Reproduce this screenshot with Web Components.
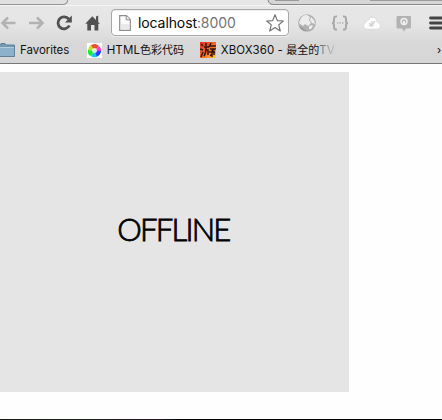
<!DOCTYPE html>
<html lang="en"><head><meta charset="utf-8"><title>localhost:8000</title>
<style>html,body{margin:0;width:442px;height:420px;overflow:hidden;background:#fefefe}</style></head>
<body><browser-window></browser-window>
<script>
const define=(name,html)=>{const t=document.createElement('template');t.innerHTML=html;
customElements.define(name,class extends HTMLElement{constructor(){super();this.attachShadow({mode:'open'}).append(t.content.cloneNode(true));}});};

define('tab-strip',`<style>:host{display:block;height:6px;background:#d0d0d0}svg{display:block}</style>
<svg width="442" height="6"><path d="M0 4.5H442" stroke="#8f8f8f"/><path d="M0 0H67.5Q66.5 4 63 4H0Z" fill="#e0e0e0"/><path d="M68 0Q67 4.5 63 4.5H0" fill="none" stroke="#959595" stroke-width="1.2"/><path d="M68.500 0Q68 4 64 5H272Q268 4 267.500 0Z" fill="#e7e7e7"/><path d="M273 4.500Q269 4 268 0H442V4.500Z" fill="#d6d6d6"/><path d="M268 0Q269 4.500 274 4.500H442" stroke="#888" fill="none"/><path d="M275 .5H299" stroke="#999"/><path d="M370 .5H442" stroke="#9b9b9b"/><path d="M0 5.500H442" stroke="#f4f4f4"/></svg>`);

define('tool-icon',`<style>:host{display:block;flex:none;width:var(--w,16px);height:16px}::slotted(svg){display:block;overflow:visible}</style><slot></slot>`);

define('address-field',`<style>:host{display:flex;flex:none;box-sizing:border-box;width:178px;height:27px;border:1px solid #a7a7a7;border-radius:4px;background:#fff;align-items:center;padding:0 4px 0 7px;box-shadow:0 1px #eee,inset 0 1px #eee}
span{flex:1;margin-left:7px;white-space:nowrap;font:14px/17px Inter,sans-serif;letter-spacing:-.1px;color:#080808}i{font-style:normal;color:#737373}svg{display:block;flex:none}</style>
<svg width="12" height="16"><path d="M.7.7H7.500L11.300 4.500V15.300H.7Z" fill="#fcfcfc" stroke="#8d8d8d" stroke-width="1.200"/><path d="M7.200.7V4.800H11.300" fill="#eee" stroke="#8d8d8d"/><path d="M2 9H10V14H2Z" fill="#e9e9e9"/></svg>
<span>localhost<i>:8000</i></span>
<svg width="18" height="18"><path d="M9 .8L11.300 6.600L17.300 7L12.700 10.900L14.300 17L9 13.600L3.700 17L5.300 10.900L.7 7L6.700 6.600Z" fill="#fff" stroke="#737373" stroke-width="1.200" stroke-linejoin="round"/></svg>`);

define('nav-toolbar',`<style>:host{display:flex;height:33px;align-items:center;padding-left:1px}.a{margin-left:11px}.field{margin:0 9px 0 10px}</style>
<tool-icon><svg width="16" height="16"><path d="M14.500 8H2M7 2.500L1.500 8L7 13.500" fill="none" stroke="#b2b2b2" stroke-width="2.500"/></svg></tool-icon>
<tool-icon style="margin-left:12px"><svg width="16" height="16"><path d="M0 8H13M8 2.500L13.500 8L8 13.500" fill="none" stroke="#b2b2b2" stroke-width="2.500"/></svg></tool-icon>
<tool-icon class="a"><svg width="16" height="16"><path d="M12.800 4.200A6 6 0 1 0 13.400 10.500" fill="none" stroke="#505050" stroke-width="2.800"/><path d="M15.800 .5V7.400H9Z" fill="#505050"/></svg></tool-icon>
<tool-icon class="a" style="margin-left:13px"><svg width="16" height="16"><path d="M.3 8.800L7.300 1.300L11 5V1.500L13.200.5V7L15 8.800H13.300V15.500H9.500V10H6V15.500H2.300V8.800Z" fill="#515151"/></svg></tool-icon>
<address-field class="field"></address-field>
<tool-icon style="--w:18px"><svg width="18" height="17"><circle cx="9" cy="8" r="8.800" fill="#b1b1b1"/><path d="M2.500 4Q5 -.5 9 0L12 2L11 5L13 8L10 11L7 9L5 11L1 8ZM13 2L16 5L17 9L14 8L12 5ZM11 11L14 10L15 11L13 14L11 14Z" fill="#ececec"/><path d="M2 11L6 14L9 16Q3 16 1 11Z" fill="#989898"/></svg></tool-icon>
<tool-icon style="margin-left:15px;--w:18px"><svg width="18" height="16"><path d="M6 1.500Q3 1 3 4V6Q3 8 1 8Q3 8 3 10V12Q3 15 6 14.500M12 1.500Q15 1 15 4V6Q15 8 17 8Q15 8 15 10V12Q15 15 12 14.500" fill="none" stroke="#a9a9a9" stroke-width="2"/><path d="M6 8H7.500M8.500 8H10M11 8H12.500" stroke="#b5b5b5" stroke-width="1.500"/></svg></tool-icon>
<tool-icon style="margin-left:14px;--w:18px"><svg width="18" height="16"><path d="M4 14.200Q.5 14 .5 11Q.5 8 3 7.500Q3 5 5.500 5Q7 1.500 11 2.500Q14 3.500 14 7Q17.500 7.500 17.500 11Q17.500 14 14 14.200Z" fill="#fdfdfd" stroke="#d4d4d4" stroke-width=".7"/><path d="M6.500 8L8.500 11L12 6M9 6V11M6 10.500H10.500" fill="none" stroke="#d5d5d5" stroke-width="1.400"/></svg></tool-icon>
<tool-icon style="margin-left:15px"><svg width="16" height="17"><path d="M2 1H14Q15 1 15 2V12Q15 13.500 13.500 13.500H10L8 16.500L6 13.500H2Q.5 13.500.5 12V2Q.5 1 2 1Z" fill="#b2b2b2"/><circle cx="8" cy="6.500" r="3" fill="#bbb" stroke="#f0f0f0" stroke-width="1.400"/><path d="M8 6V9.500" stroke="#f5f5f5" stroke-width="1.800"/></svg></tool-icon>
<tool-icon style="margin-left:16px;--w:14px"><svg width="14" height="16"><path d="M2.500 3H14M2.500 8H14M2.500 13H14" stroke="#454545" stroke-width="2.800" stroke-linecap="round"/></svg></tool-icon>`);

define('bookmark-item',`<style>:host{display:flex;flex:none;align-items:center;height:16px;white-space:nowrap;color:#111;font:11.5px/16px Inter,"Noto Sans CJK SC",sans-serif}
::slotted(svg){display:block;flex:none;margin-right:5px}</style><slot name="icon"></slot><slot></slot>`);

define('bookmarks-bar',`<style>:host{display:flex;height:22px;align-items:center}.fade{background:linear-gradient(90deg,#666 0,#c8c8c8 100%);background-clip:text;-webkit-background-clip:text;color:transparent}.more{margin-left:auto;width:5px;white-space:nowrap;font:11px/16px Inter,sans-serif}
b{font-weight:400;font-size:11px;letter-spacing:0}.f1{letter-spacing:-.05px}.f2{letter-spacing:.12px}.f3{letter-spacing:.1px}</style>
<bookmark-item><svg slot="icon" width="15" height="16"><path d="M-2 3H0L1 1.500H5L6.500 3H14.500V14.500H-2Z" fill="#7298b4" stroke="#5e8099"/><path d="M0 5.500H14V14H0Z" fill="#8db1cb"/><path d="M0 5.500H14" stroke="#b3cddd"/></svg><span class="f1">Favorites</span></bookmark-item>
<bookmark-item style="width:97px;margin-left:17.500px"><svg slot="icon" width="15" height="15"><path d="M0 0H15V15H0Z" fill="#fff"/><path d="M7.500 7.500L3 3Q7.500-1 12 3Z" fill="#ed4c31"/><path d="M7.500 7.500L12 3Q15 6 14 9Z" fill="#ff43bd"/><path d="M7.500 7.500L14 8Q14 12 9 14Z" fill="#253cff"/><path d="M7.500 7.500L10 14Q5 15 4 13Z" fill="#17c5ee"/><path d="M7.500 7.500L4 13Q0 12 1 7Z" fill="#12f026"/><path d="M7.500 7.500L1 7Q1 4 4 2Z" fill="#b4e632"/><circle cx="7.500" cy="7.500" r="2.500" fill="#fff" opacity=".8"/></svg><span class="f2">HTML<b>色彩代码</b></span></bookmark-item>
<bookmark-item style="margin-left:16px"><svg slot="icon" width="16" height="16"><defs><linearGradient id="g" x2="1" y2="1"><stop stop-color="#e43322"/><stop offset=".55" stop-color="#f66a25"/><stop offset="1" stop-color="#ffd534"/></linearGradient></defs><path d="M0 0H16V16H0Z" fill="url(#g)"/><path d="M1 2L3 4M0 7L3 8M3 10L1 15M6 1V4M4 5H9M6 5Q6 11 4 14M6 8H8V13M11 1L9 5M10 4H16M10 7H15L12 9V14L10 13M9 10H15M14 9V13" fill="none" stroke="#301611" stroke-width="1.500"/></svg><span class="f3">XBOX360 - <b>最全的</b><span class="fade">TV</span></span></bookmark-item>
<span class="more">›</span>`);

define('browser-chrome',`<style>:host{display:block;box-sizing:border-box;height:64px;border-bottom:1px solid #777;background:linear-gradient(#e7e7e7 0,#e5e5e5 24px,#d8d8d8 43px,#d6d6d6 63px)}</style><tab-strip></tab-strip><nav-toolbar></nav-toolbar><bookmarks-bar></bookmarks-bar>`);

define('offline-panel',`<style>:host{display:flex;box-sizing:border-box;width:349px;height:320px;padding:0 4px 7px 0;background:#e5e5e5;align-items:center;justify-content:center;font:300 31px/38px Lato,sans-serif;color:#000;-webkit-text-stroke:.85px #000}</style><slot></slot>`);

define('browser-window',`<style>:host{display:flex;flex-direction:column;width:442px;height:420px;background:#fefefe}main{flex:1;padding-top:8px}footer{height:1px;background:linear-gradient(90deg,#141a10,#1c211d 80px,#20131c 160px,#000 180px)}</style>
<browser-chrome></browser-chrome><main><offline-panel><span style="letter-spacing:-1.75px;margin-right:-1.75px">OFFLINE</span></offline-panel></main><footer></footer>`);
</script></body></html>
